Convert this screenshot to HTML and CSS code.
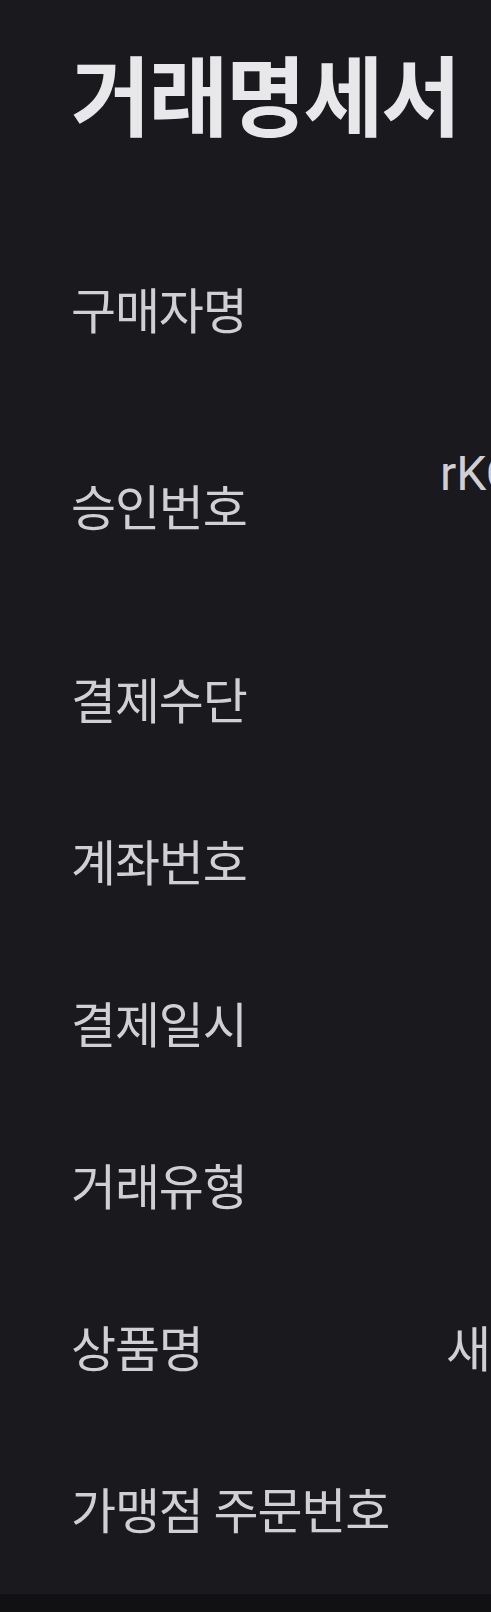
FILE: index.html
```html
<!DOCTYPE html>
<html lang="ko">
<head>
<meta charset="utf-8">
<title>거래명세서</title>
<link rel="stylesheet" href="styles.css">
</head>
<body>
<main class="page">
  <h1 class="title">거래명세서</h1>
  <dl class="rows">
    <div class="row row-first">
      <dt class="label">구매자명</dt>
      <dd class="value"></dd>
    </div>
    <div class="row row-wrap">
      <dt class="label">승인번호</dt>
      <dd class="value">rKC7X2M9QP4LZ8VN</dd>
    </div>
    <div class="row">
      <dt class="label">결제수단</dt>
      <dd class="value"></dd>
    </div>
    <div class="row">
      <dt class="label">계좌번호</dt>
      <dd class="value"></dd>
    </div>
    <div class="row">
      <dt class="label">결제일시</dt>
      <dd class="value"></dd>
    </div>
    <div class="row">
      <dt class="label">거래유형</dt>
      <dd class="value"></dd>
    </div>
    <div class="row">
      <dt class="label">상품명</dt>
      <dd class="value value-product">새벽배송</dd>
    </div>
    <div class="row">
      <dt class="label">가맹점 주문번호</dt>
      <dd class="value"></dd>
    </div>
  </dl>
</main>
<div class="bottom-bar"></div>
</body>
</html>
```

FILE: styles.css
```css
html, body {
  margin: 0;
  padding: 0;
  background: #1a191e;
  overflow: hidden;
}

body {
  width: 491px;
  height: 1612px;
  display: flex;
  flex-direction: column;
  font-family: "Roboto", "Noto Sans CJK KR", sans-serif;
}

.page {
  flex: 1;
  padding-left: 71px;
  overflow: hidden;
}

.title {
  margin: 0;
  padding-top: 44px;
  height: 228px;
  box-sizing: border-box;
  font-size: 87px;
  line-height: 1.3;
  font-weight: 700;
  letter-spacing: -2.5px;
  color: #e8e8ea;
  white-space: nowrap;
}

.rows {
  margin: 0;
}

.row {
  display: grid;
  grid-template-columns: 369px 1fr;
  align-items: center;
  height: 162px;
  color: #d0d0d4;
  font-size: 49px;
  line-height: 62px;
}

.row-first {
  height: 170px;
}

.row-wrap {
  height: 224px;
}

.row-wrap .value {
  align-self: start;
  padding-top: 45px;
  font-size: 48px;
}

.label {
  margin: 0;
  letter-spacing: -1.2px;
  white-space: nowrap;
}

.value {
  margin: 0;
  white-space: nowrap;
  letter-spacing: 0;
}

.value-product {
  padding-left: 6px;
}

.bottom-bar {
  height: 18px;
  flex: none;
  background: #111114;
}
```
